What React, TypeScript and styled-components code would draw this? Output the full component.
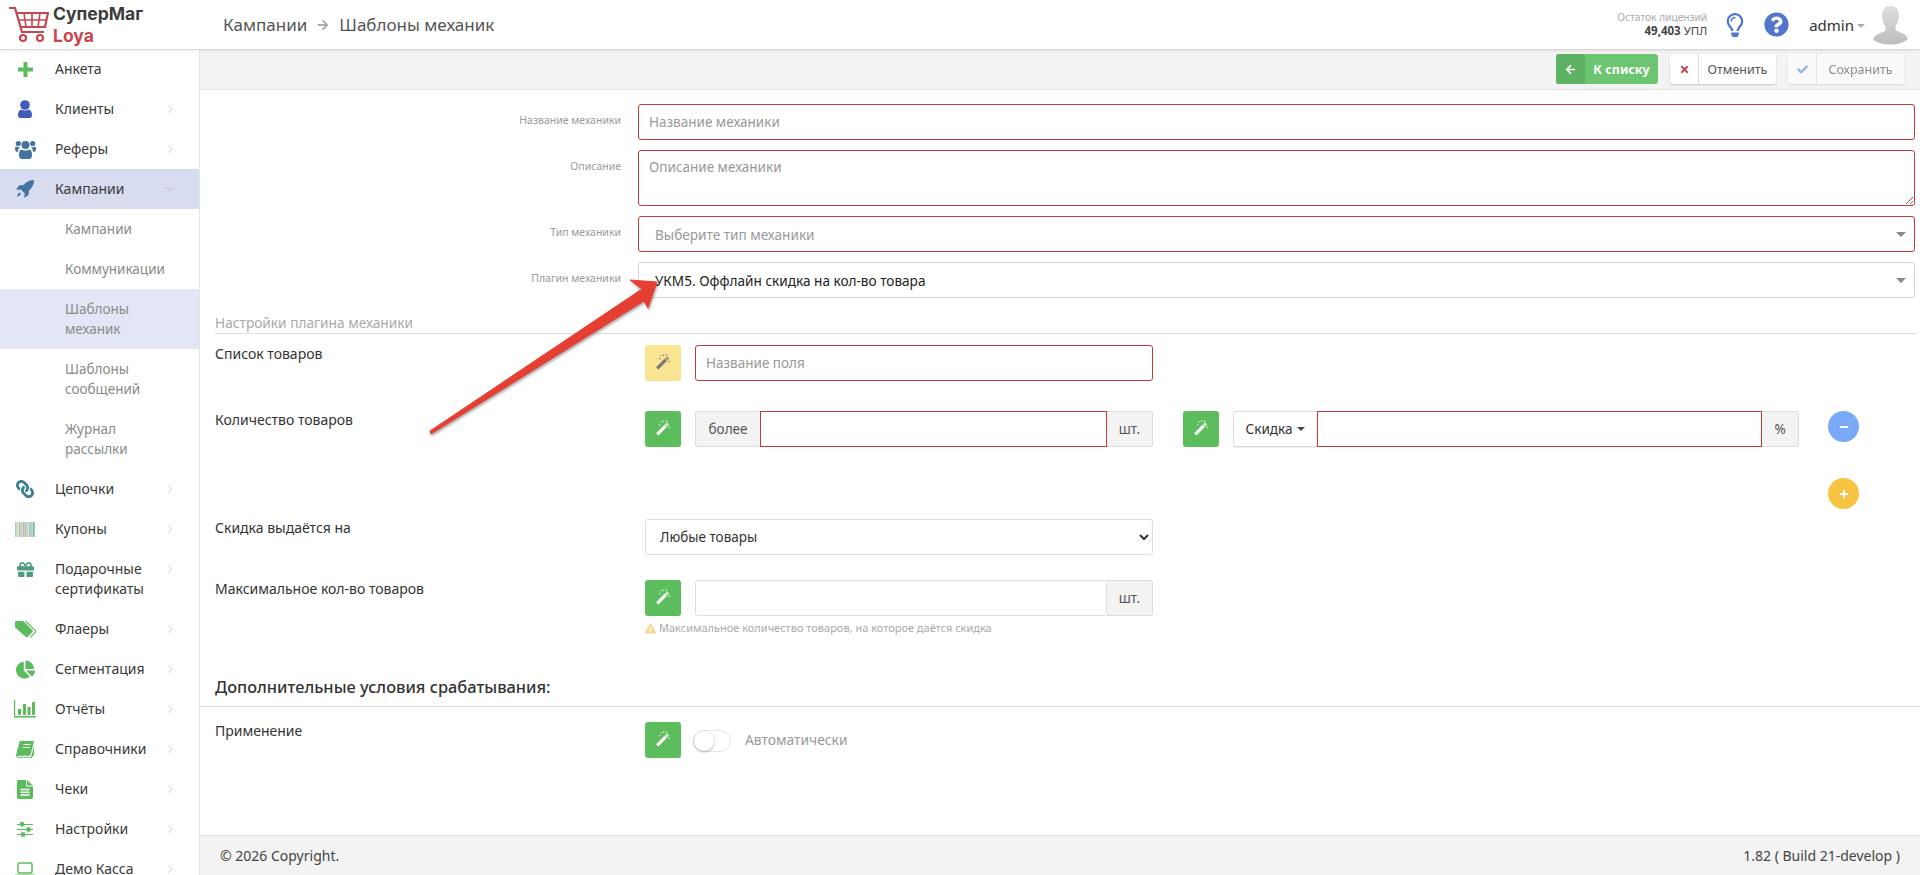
import React from "react";
import styled, { createGlobalStyle } from "styled-components";
import { ChevronDown, ChevronRight } from "lucide-react";
import {
  FaArrowRight,
  FaArrowLeft,
  FaChartPie,
  FaCheck,
  FaExclamationTriangle,
  FaGift,
  FaLink,
  FaMinus,
  FaPlus,
  FaQuestionCircle,
  FaRegLightbulb,
  FaTimes,
} from "react-icons/fa";

const FONT = `"Noto Sans", "Open Sans", sans-serif`;

const GlobalStyle = createGlobalStyle`
  html, body {
    margin: 0;
    height: 875px;
    overflow: hidden;
    background: #fff;
  }
  * { box-sizing: border-box; }
  body {
    font-family: ${FONT};
    font-size: 13px;
    color: #333;
  }
`;

const PlusIcon = () => (
  <svg width="15" height="15" viewBox="0 0 15 15" fill="currentColor">
    <path d="M5.500 0h4v5.500H15v4H9.500V15h-4V9.500H0v-4h5.500z" />
  </svg>
);

const UserIcon = () => (
  <svg width="14" height="18" viewBox="0 0 14 18" fill="currentColor">
    <circle cx="7" cy="5" r="4.800" />
    <path d="M3.200 9.500c2 1.400 5.600 1.400 7.600 0 2 .5 3.200 2.500 3.200 5.500 0 2-1 3-2.500 3h-9C1 18 0 17 0 15c0-3 1.200-5 3.200-5.500z" />
  </svg>
);

const UsersIcon = () => (
  <svg width="21" height="19" viewBox="0 0 21 19" fill="currentColor">
    <circle cx="10.500" cy="5" r="4" />
    <circle cx="3.300" cy="3.500" r="2.600" />
    <circle cx="17.700" cy="3.500" r="2.600" />
    <path d="M6.500 9.500c2 1.300 6 1.300 8 0 1.800.6 2.500 2.500 2.500 5.500 0 2.500-1 4-3 4H7c-2 0-3-1.500-3-4 0-3 .7-4.900 2.500-5.500z" />
    <path d="M.1 8c0-1 .4-1.300 1-1.500 1.300.8 3 .8 4.300.3-1.300 1-2.200 2.500-2.400 5H1.500C.5 11.800 0 10.500.1 8zM20.900 8c0-1-.4-1.300-1-1.500-1.300.8-3 .8-4.300.3 1.300 1 2.200 2.500 2.400 5h1.500c1 0 1.500-1.300 1.400-3.300z" />
  </svg>
);

const RocketIcon = () => (
  <svg width="18" height="18" viewBox="0 0 18 18" fill="currentColor">
    <path d="M18 0c-.2 4.500-1.500 7.500-5 10.500l-.5 4.500L8.300 18l.4-4.700-3.900-3.900L0 9.800 3 5.500l4.600-.5C10.500 1.500 13.500.2 18 0z" />
    <path d="M3.500 12.500c-1 .5-2 2-2.500 4 2-.5 3.500-1.500 4-2.500z" />
  </svg>
);

const BarcodeIcon = () => (
  <svg width="20" height="15" viewBox="0 0 20 15">
    {["#a9cfc0", "#e6d9a8", "#9fc3d6", "#d8c9a0", "#b8b8cc", "#9dcbb8", "#e0cfa8", "#a6bfd8", "#9fd0bc", "#7fb5b0"].map(
      (color, i) => (
        <rect key={i} x={i * 2} y="0" width="1.700" height="15" fill={color} />
      ),
    )}
  </svg>
);

const TagsIcon = () => (
  <svg width="21" height="17" viewBox="0 0 21 17" fill="currentColor">
    <path d="M0 1.200C0 .5.500 0 1.200 0h6.300c.5 0 1 .2 1.300.5l8.700 8.700c.5.500.5 1.200 0 1.700l-5 5c-.5.500-1.200.5-1.700 0L.5 6.800C.2 6.500 0 6 0 5.500z" />
    <path d="M10.500 0l9.800 9.600c.6.600.6 1.100 0 1.700l-5 5" fill="none" stroke="currentColor" strokeWidth="1.200" />
  </svg>
);

const ChartIcon = () => (
  <svg width="22" height="18" viewBox="0 0 22 18" fill="currentColor">
    <path d="M0 0h1.200v16H22v1.500H0z" />
    <rect x="4" y="9" width="3" height="6" />
    <rect x="9" y="4" width="3" height="11" />
    <rect x="13.500" y="7" width="3" height="8" />
    <rect x="18" y="2" width="3" height="13" />
  </svg>
);

const BookIcon = () => (
  <svg width="18" height="17" viewBox="0 0 18 17" fill="currentColor">
    <path d="M5 0h12.500c.4 0 .5.300.4.700L14.500 14c-.1.500-.4.700-.9.700H2.800c-.8 0-1.200.4-1 1 .1.400.5.600 1 .6h11.500c.7 0 .8-.3 1-.8L18 4.500v9.500l-2 2.500c-.3.400-.7.500-1.200.5H3c-2 0-3.300-1.500-2.800-3.500L3.300 1.500C3.600.5 4 0 5 0z" />
    <path d="M7.500 3.500h7M6.800 6.500h7" stroke="#fff" strokeWidth="1.200" />
  </svg>
);

const FileIcon = () => (
  <svg width="16" height="19" viewBox="0 0 16 19" fill="currentColor">
    <path d="M1.500 0H9v5.500c0 .5.500 1 1 1h6v11c0 .8-.7 1.500-1.500 1.500h-13C.7 19 0 18.300 0 17.500v-16C0 .7.700 0 1.500 0zM10 0l6 5.500h-6z" />
    <path d="M3.500 9.500h9M3.500 12.200h9M3.500 15h9" stroke="#fff" strokeWidth="1.400" />
  </svg>
);

const SlidersIcon = () => (
  <svg width="18" height="15" viewBox="0 0 18 15" fill="currentColor">
    <path d="M1 2h16v1H1zM1 7h16v1H1zM1 12h16v1H1z" />
    <rect x="4" y="0" width="4" height="4.500" rx="1" />
    <rect x="10.500" y="5.200" width="4" height="4.500" rx="1" />
    <rect x="5" y="10.300" width="4" height="4.500" rx="1" />
  </svg>
);

const LaptopIcon = () => (
  <svg width="20" height="15" viewBox="0 0 20 15" fill="none" stroke="currentColor">
    <rect x="3" y="1" width="14" height="10" rx="1.500" strokeWidth="1.500" />
    <path d="M0 13.500h20" strokeWidth="2" />
  </svg>
);

const WandGlyph = () => (
  <svg width="16" height="16" viewBox="0 0 14 14">
    <path d="M2 12.500L9.500 5" stroke="currentColor" strokeWidth="2.800" />
    <path d="M9.800 4.700l1.700-1.700" stroke="currentColor" strokeOpacity="0.7" strokeWidth="2.800" />
    <path d="M5 1.500h1M7.500 .5v1M3.500 4h1M12 6.500h1M9.500 1h1" stroke="currentColor" strokeWidth="1" />
  </svg>
);

const menuTop = [
  { icon: <PlusIcon />, color: "#5cbb5c", label: "Анкета" },
  { icon: <UserIcon />, color: "#3f5cb8", label: "Клиенты", arrow: true },
  { icon: <UsersIcon />, color: "#44739f", label: "Реферы", arrow: true },
];

const menuBottom = [
  { icon: <FaLink style={{ transform: "scaleX(-1)" }} size={18} />, color: "#3f7f8f", label: "Цепочки" },
  { icon: <BarcodeIcon />, color: "#7fa7a0", label: "Купоны" },
  { icon: <FaGift size={17} />, color: "#4f9a7c", label: "Подарочные сертификаты" },
  { icon: <TagsIcon />, color: "#5cbb5c", label: "Флаеры" },
  { icon: <FaChartPie size={19} />, color: "#5cbb5c", label: "Сегментация" },
  { icon: <ChartIcon />, color: "#5cbb5c", label: "Отчёты" },
  { icon: <BookIcon />, color: "#5cbb5c", label: "Справочники" },
  { icon: <FileIcon />, color: "#5cbb5c", label: "Чеки" },
  { icon: <SlidersIcon />, color: "#5cbb5c", label: "Настройки" },
  { icon: <LaptopIcon />, color: "#5cbb5c", label: "Демо Касса" },
];

const subMenu = [
  { label: "Кампании" },
  { label: "Коммуникации" },
  { label: "Шаблоны механик", active: true },
  { label: "Шаблоны сообщений" },
  { label: "Журнал рассылки" },
];

const Page = styled.div`
  position: relative;
  width: 1920px;
  height: 875px;
  overflow: hidden;
  display: flex;
  flex-direction: column;
`;

const Header = styled.header`
  position: relative;
  z-index: 2;
  flex: 0 0 50px;
  display: flex;
  align-items: center;
  background: #fff;
  border-bottom: 1px solid #d9d9d9;
  box-shadow: 0 1px 2px rgba(0, 0, 0, 0.08);
`;

const Brand = styled.div`
  width: 223px;
  display: flex;
  align-items: center;
  padding-left: 9px;
  gap: 4px;
`;

const BrandText = styled.div`
  font-family: Inter, ${FONT};
  font-weight: 700;
  font-size: 17.5px;
  line-height: 22px;
  color: #3c3c3c;
  margin-top: 1px;
`;

const BrandAccent = styled.div`
  color: #c8474f;
`;

const Crumbs = styled.div`
  flex: 1;
  display: flex;
  align-items: center;
  gap: 10px;
  font-size: 17px;
  color: #555;
`;

const CrumbArrow = styled(FaArrowRight)`
  font-size: 12px;
  color: #aaa;
`;

const License = styled.div`
  text-align: right;
  line-height: 14px;
  margin-right: 16px;
  margin-top: -2px;
`;

const LicenseTitle = styled.div`
  font-size: 10.2px;
  color: #aaa;
`;

const LicenseValue = styled.div`
  font-size: 11.5px;
  color: #444;
  b {
    font-weight: 700;
  }
`;

const HeaderIcon = styled.span<{ $right: number; $size: number }>`
  display: flex;
  color: #5175cc;
  font-size: ${(p) => p.$size}px;
  margin-right: ${(p) => p.$right}px;
`;

const UserName = styled.span`
  font-size: 15px;
  color: #333;
`;

const Caret = styled.span`
  display: inline-block;
  width: 0;
  height: 0;
  margin-left: 3px;
  vertical-align: middle;
  border-left: 4px solid transparent;
  border-right: 4px solid transparent;
  border-top: 4px solid #aaa;
`;

const Avatar = styled.svg`
  margin: 1px 12px 0 8px;
`;

const Body = styled.div`
  flex: 1;
  display: flex;
  min-height: 0;
`;

const Sidebar = styled.nav`
  flex: 0 0 200px;
  margin-top: -1px;
  overflow: hidden;
  background: #fff;
  border-right: 1px solid #e4e4e4;
`;

const MenuRow = styled.div<{ $active?: boolean }>`
  display: flex;
  align-items: flex-start;
  padding: 10px 0;
  line-height: 20px;
  font-size: 14px;
  color: #3a3a3a;
  background: ${(p) => (p.$active ? "#d7dcf0" : "transparent")};
`;

const MenuIcon = styled.span<{ $color: string }>`
  flex: 0 0 55px;
  height: 20px;
  padding-right: 5px;
  display: flex;
  align-items: center;
  justify-content: center;
  color: ${(p) => p.$color};
`;

const MenuLabel = styled.span`
  flex: 1;
`;

const MenuArrow = styled.span`
  flex: 0 0 36px;
  height: 20px;
  display: flex;
  align-items: center;
  color: #aaa;
`;

const SubRow = styled.div<{ $active?: boolean }>`
  padding: 10px 50px 10px 65px;
  line-height: 20px;
  font-size: 13.5px;
  color: #8a8a8a;
  background: ${(p) => (p.$active ? "#e2e6f5" : "transparent")};
`;

const Main = styled.main`
  flex: 1;
  min-width: 0;
  display: flex;
  flex-direction: column;
`;

const Toolbar = styled.div`
  flex: 0 0 40px;
  display: flex;
  justify-content: flex-end;
  align-items: flex-start;
  gap: 12px;
  padding: 4px 16px 0 0;
  background: #f3f3f3;
  border-bottom: 1px solid #e2e2e2;
`;

const ActionButton = styled.div<{ $green?: boolean; $faded?: boolean }>`
  display: flex;
  height: 30px;
  border-radius: 3px;
  overflow: hidden;
  font-size: 12.5px;
  background: ${(p) => (p.$green ? "#6cc570" : "#fff")};
  color: ${(p) => (p.$green ? "#fff" : "#555")};
  font-weight: ${(p) => (p.$green ? 700 : 400)};
  box-shadow: ${(p) => (p.$green ? "none" : "0 1px 2px rgba(0,0,0,.18)")};
  opacity: ${(p) => (p.$faded ? 0.65 : 1)};
`;

const ActionIcon = styled.span<{ $color: string; $bg?: string }>`
  flex: 0 0 29px;
  display: flex;
  align-items: center;
  justify-content: center;
  font-size: 11px;
  color: ${(p) => p.$color};
  background: ${(p) => p.$bg || "transparent"};
  border-right: 1px solid ${(p) => p.$bg || "#ddd"};
`;

const ActionLabel = styled.span<{ $width: number }>`
  width: ${(p) => p.$width}px;
  display: flex;
  align-items: center;
  justify-content: center;
`;

const Content = styled.div`
  flex: 1;
  min-height: 0;
  padding-top: 14px;
`;

const TopForm = styled.div`
  display: flex;
  flex-direction: column;
  gap: 10px;
  padding-right: 5px;
`;

const TopField = styled.div`
  display: grid;
  grid-template-columns: 421px 1fr;
  column-gap: 17px;
`;

const TopLabel = styled.label`
  text-align: right;
  font-size: 10.5px;
  line-height: 14px;
  padding-top: 9px;
  color: #999;
`;

const TextInput = styled.input<{ $invalid?: boolean; $square?: boolean }>`
  display: block;
  width: 100%;
  min-width: 0;
  height: 36px;
  padding: 0 10px;
  font: 13.5px ${FONT};
  color: #333;
  background: #fff;
  outline: none;
  border: 1px solid ${(p) => (p.$invalid ? "#c23a3a" : "#ddd")};
  border-radius: ${(p) => (p.$square ? 0 : 3)}px;
  &::placeholder {
    color: #999;
    opacity: 1;
  }
`;

const TextArea = styled.textarea`
  display: block;
  width: 100%;
  height: 56px;
  padding: 7px 10px;
  font: 13.5px ${FONT};
  outline: none;
  border: 1px solid #c23a3a;
  border-radius: 3px;
  &::placeholder {
    color: #999;
    opacity: 1;
  }
`;

const FakeSelect = styled.div<{ $invalid?: boolean; $filled?: boolean }>`
  height: 36px;
  display: flex;
  align-items: center;
  justify-content: space-between;
  padding: 0 8px 0 16px;
  font-size: 13.6px;
  color: ${(p) => (p.$filled ? "#222" : "#999")};
  border: 1px solid ${(p) => (p.$invalid ? "#c23a3a" : "#d5d5d5")};
  border-radius: 3px;
`;

const SelectCaret = styled.span`
  width: 0;
  height: 0;
  border-left: 5px solid transparent;
  border-right: 5px solid transparent;
  border-top: 5px solid #888;
`;

const Section = styled.div`
  margin: 15px 3px 0 15px;
  height: 21px;
  border-bottom: 1px solid #ddd;
  font-size: 13.7px;
  line-height: 20px;
  color: #aaa;
`;

const Plugin = styled.div`
  padding: 11px 0 0 15px;
`;

const PluginRow = styled.div<{ $after: number }>`
  display: flex;
  align-items: flex-start;
  margin-bottom: ${(p) => p.$after}px;
`;

const RowLabel = styled.div`
  flex: 0 0 430px;
  font-size: 14px;
  line-height: 20px;
  color: #333;
  margin-top: -1px;
  height: 20px;
`;

const WandButton = styled.span<{ $yellow?: boolean }>`
  flex: 0 0 36px;
  height: 36px;
  margin-right: 14px;
  display: flex;
  align-items: center;
  justify-content: center;
  padding-bottom: 3px;
  border-radius: 3px;
  color: ${(p) => (p.$yellow ? "#777" : "#fff")};
  background: ${(p) => (p.$yellow ? "#f9e491" : "#5cbd5c")};
`;

const FieldCol = styled.div<{ $width: number }>`
  flex: 0 0 ${(p) => p.$width}px;
`;

const InputGroup = styled.div<{ $width: number }>`
  flex: 0 0 ${(p) => p.$width}px;
  display: flex;
  height: 36px;
`;

const Addon = styled.span<{ $width: number; $side: "left" | "right" }>`
  flex: 0 0 ${(p) => p.$width}px;
  display: flex;
  align-items: center;
  justify-content: center;
  font-size: 13.5px;
  color: #555;
  background: #f3f3f3;
  border: 1px solid #ddd;
  border-${(p) => (p.$side === "left" ? "right" : "left")}: 0;
  border-radius: ${(p) => (p.$side === "left" ? "3px 0 0 3px" : "0 3px 3px 0")};
`;

const DropAddon = styled.span`
  flex: 0 0 84px;
  display: flex;
  align-items: center;
  justify-content: center;
  gap: 5px;
  font-size: 13.5px;
  color: #333;
  background: #fff;
  border: 1px solid #ddd;
  border-right: 0;
  border-radius: 3px 0 0 3px;
  box-shadow: 0 1px 1px rgba(0, 0, 0, 0.08);
`;

const DropCaret = styled.span`
  width: 0;
  height: 0;
  border-left: 4px solid transparent;
  border-right: 4px solid transparent;
  border-top: 4px solid #444;
`;

const SecondWand = styled(WandButton)`
  margin-left: 30px;
  margin-right: 14px;
`;

const RoundButton = styled.span<{ $color: string; $left: number; $top?: number }>`
  flex: 0 0 31px;
  height: 31px;
  margin-left: ${(p) => p.$left}px;
  margin-top: ${(p) => p.$top || 0}px;
  display: flex;
  align-items: center;
  justify-content: center;
  border-radius: 50%;
  font-size: 10px;
  color: #fff;
  background: ${(p) => p.$color};
`;

const NativeSelect = styled.select`
  display: block;
  width: 100%;
  height: 36px;
  padding: 0 10px;
  font: 13.5px ${FONT};
  color: #333;
  background: #fff;
  outline: none;
  border: 1px solid #ddd;
  border-radius: 3px;
`;

const Hint = styled.div`
  display: flex;
  align-items: center;
  gap: 3px;
  margin: 5px 0 0 -50px;
  font-size: 11px;
  line-height: 14px;
  color: #aaa;
  svg {
    color: #f8d690;
    font-size: 11px;
  }
`;

const ExtraHeading = styled.h3`
  margin: 27px 0 0;
  height: 45px;
  padding: 13px 0 0 15px;
  font-size: 16.4px;
  line-height: 24px;
  font-weight: 500;
  color: #333;
  border-bottom: 1px solid #ddd;
`;

const ExtraRow = styled.div`
  display: flex;
  align-items: flex-start;
  padding: 15px 0 0 15px;
`;

const SwitchTrack = styled.span`
  position: relative;
  flex: 0 0 38px;
  height: 22px;
  margin: 8px 14px 0 -2px;
  border: 1px solid #e5e5e5;
  border-radius: 11px;
  background: #fff;
  &::before {
    content: "";
    position: absolute;
    left: 0;
    top: 0;
    width: 20px;
    height: 20px;
    border-radius: 50%;
    background: #fff;
    box-shadow: 0 1px 3px rgba(0, 0, 0, 0.3);
  }
`;

const SwitchLabel = styled.span`
  font-size: 13.8px;
  line-height: 36px;
  color: #999;
`;

const Footer = styled.footer`
  flex: 0 0 40px;
  display: flex;
  align-items: center;
  justify-content: space-between;
  padding: 0 20px;
  font-size: 14px;
  color: #444;
  background: #f3f3f3;
  border-top: 1px solid #ddd;
`;

const ArrowOverlay = styled.svg`
  position: absolute;
  left: 0;
  top: 0;
  z-index: 5;
  pointer-events: none;
  filter: drop-shadow(1px 2px 1px rgba(0, 0, 0, 0.3));
`;

const CartLogo = () => (
  <svg width="40" height="36" viewBox="0 0 40 36" fill="none" stroke="#c8474f" strokeWidth="2.2">
    <path d="M0 1h6l7 24h22" />
    <path d="M7 6h32l-3 14H12" />
    <path d="M15 6l2 14M23 6v14M31 6l-2 14M10 13h27" strokeWidth="1.600" />
    <circle cx="14" cy="31" r="3" />
    <circle cx="31" cy="31" r="3" />
  </svg>
);

const Wand = ({ yellow }: { yellow?: boolean }) => (
  <WandButton $yellow={yellow}>
    <WandGlyph />
  </WandButton>
);

const App = () => {
  return (
    <Page>
      <GlobalStyle />
      <Header>
        <Brand>
          <CartLogo />
          <BrandText>
            СуперМаг
            <BrandAccent>Loya</BrandAccent>
          </BrandText>
        </Brand>
        <Crumbs>
          Кампании <CrumbArrow /> Шаблоны механик
        </Crumbs>
        <License>
          <LicenseTitle>Остаток лицензий</LicenseTitle>
          <LicenseValue>
            <b>49,403</b> УПЛ
          </LicenseValue>
        </License>
        <HeaderIcon $right={17} $size={24}>
          <FaRegLightbulb />
        </HeaderIcon>
        <HeaderIcon $right={20} $size={25}>
          <FaQuestionCircle />
        </HeaderIcon>
        <UserName>
          admin
          <Caret />
        </UserName>
        <Avatar width="35" height="40" viewBox="0 0 35 40">
          <defs>
            <linearGradient id="avatar" x1="0" y1="0" x2="0" y2="1">
              <stop offset="0" stopColor="#dedede" />
              <stop offset="1" stopColor="#bdbdbd" />
            </linearGradient>
          </defs>
          <path
            fill="url(#avatar)"
            d="M17.500 1c6 0 8.500 4 8.500 9.500 0 4-1.500 8-3.500 10.500v4c2 2 11 3 12.500 9-4 3.500-10 5.500-17.500 5.500S4 38 0 34.500c1.500-6 10.500-7 12.500-9v-4C10.500 19 9 15 9 10.500 9 5 11.500 1 17.500 1z"
          />
        </Avatar>
      </Header>
      <Body>
        <Sidebar>
          {menuTop.map((item) => (
            <MenuRow key={item.label}>
              <MenuIcon $color={item.color}>{item.icon}</MenuIcon>
              <MenuLabel>{item.label}</MenuLabel>
              <MenuArrow>{item.arrow && <ChevronRight size={14} strokeWidth={1} />}</MenuArrow>
            </MenuRow>
          ))}
          <MenuRow $active>
            <MenuIcon $color="#44739f">
              <RocketIcon />
            </MenuIcon>
            <MenuLabel>Кампании</MenuLabel>
            <MenuArrow>
              <ChevronDown size={14} strokeWidth={1} />
            </MenuArrow>
          </MenuRow>
          {subMenu.map((item) => (
            <SubRow key={item.label} $active={item.active}>
              {item.label}
            </SubRow>
          ))}
          {menuBottom.map((item) => (
            <MenuRow key={item.label}>
              <MenuIcon $color={item.color}>{item.icon}</MenuIcon>
              <MenuLabel>{item.label}</MenuLabel>
              <MenuArrow>
                <ChevronRight size={14} strokeWidth={1} />
              </MenuArrow>
            </MenuRow>
          ))}
        </Sidebar>
        <Main>
          <Toolbar>
            <ActionButton $green>
              <ActionIcon $color="#fff" $bg="#5cb162">
                <FaArrowLeft />
              </ActionIcon>
              <ActionLabel $width={73}>К списку</ActionLabel>
            </ActionButton>
            <ActionButton>
              <ActionIcon $color="#c8474f">
                <FaTimes />
              </ActionIcon>
              <ActionLabel $width={77}>Отменить</ActionLabel>
            </ActionButton>
            <ActionButton $faded>
              <ActionIcon $color="#5a8ee8">
                <FaCheck />
              </ActionIcon>
              <ActionLabel $width={87}>Сохранить</ActionLabel>
            </ActionButton>
          </Toolbar>
          <Content>
            <TopForm>
              <TopField>
                <TopLabel>Название механики</TopLabel>
                <TextInput $invalid readOnly placeholder="Название механики" />
              </TopField>
              <TopField>
                <TopLabel>Описание</TopLabel>
                <TextArea readOnly placeholder="Описание механики" />
              </TopField>
              <TopField>
                <TopLabel>Тип механики</TopLabel>
                <FakeSelect $invalid>
                  Выберите тип механики
                  <SelectCaret />
                </FakeSelect>
              </TopField>
              <TopField>
                <TopLabel>Плагин механики</TopLabel>
                <FakeSelect $filled>
                  УКМ5. Оффлайн скидка на кол-во товара
                  <SelectCaret />
                </FakeSelect>
              </TopField>
            </TopForm>
            <Section>Настройки плагина механики</Section>
            <Plugin>
              <PluginRow $after={30}>
                <RowLabel>Список товаров</RowLabel>
                <Wand yellow />
                <FieldCol $width={458}>
                  <TextInput $invalid readOnly placeholder="Название поля" />
                </FieldCol>
              </PluginRow>
              <PluginRow $after={0}>
                <RowLabel>Количество товаров</RowLabel>
                <Wand />
                <InputGroup $width={458}>
                  <Addon $side="left" $width={65}>
                    более
                  </Addon>
                  <TextInput $invalid $square readOnly />
                  <Addon $side="right" $width={46}>
                    шт.
                  </Addon>
                </InputGroup>
                <SecondWand>
                  <WandGlyph />
                </SecondWand>
                <InputGroup $width={566}>
                  <DropAddon>
                    Скидка <DropCaret />
                  </DropAddon>
                  <TextInput $invalid $square readOnly />
                  <Addon $side="right" $width={37}>
                    %
                  </Addon>
                </InputGroup>
                <RoundButton $color="#7aa9f7" $left={29}>
                  <FaMinus />
                </RoundButton>
              </PluginRow>
              <PluginRow $after={10}>
                <RowLabel />
                <FieldCol $width={1183} />
                <RoundButton $color="#f7c343" $left={0} $top={31}>
                  <FaPlus />
                </RoundButton>
              </PluginRow>
              <PluginRow $after={25}>
                <RowLabel>Скидка выдаётся на</RowLabel>
                <FieldCol $width={508}>
                  <NativeSelect defaultValue="any">
                    <option value="any">Любые товары</option>
                  </NativeSelect>
                </FieldCol>
              </PluginRow>
              <PluginRow $after={0}>
                <RowLabel>Максимальное кол-во товаров</RowLabel>
                <Wand />
                <FieldCol $width={458}>
                  <InputGroup $width={458}>
                    <TextInput readOnly />
                    <Addon $side="right" $width={46}>
                      шт.
                    </Addon>
                  </InputGroup>
                  <Hint>
                    <FaExclamationTriangle />
                    Максимальное количество товаров, на которое даётся скидка
                  </Hint>
                </FieldCol>
              </PluginRow>
            </Plugin>
            <ExtraHeading>Дополнительные условия срабатывания:</ExtraHeading>
            <ExtraRow>
              <RowLabel>Применение</RowLabel>
              <Wand />
              <SwitchTrack />
              <SwitchLabel>Автоматически</SwitchLabel>
            </ExtraRow>
          </Content>
          <Footer>
            <span>© 2026 Copyright.</span>
            <span>1.82 ( Build 21-develop )</span>
          </Footer>
        </Main>
      </Body>
      <ArrowOverlay width="1920" height="875">
        <polygon
          fill="#e53f33"
          stroke="#e53f33"
          strokeWidth="1"
          strokeLinejoin="round"
          points="657,282 630,280 642,289 430,431 431,434 644,301 648,308"
        />
      </ArrowOverlay>
    </Page>
  );
};

export default App;
